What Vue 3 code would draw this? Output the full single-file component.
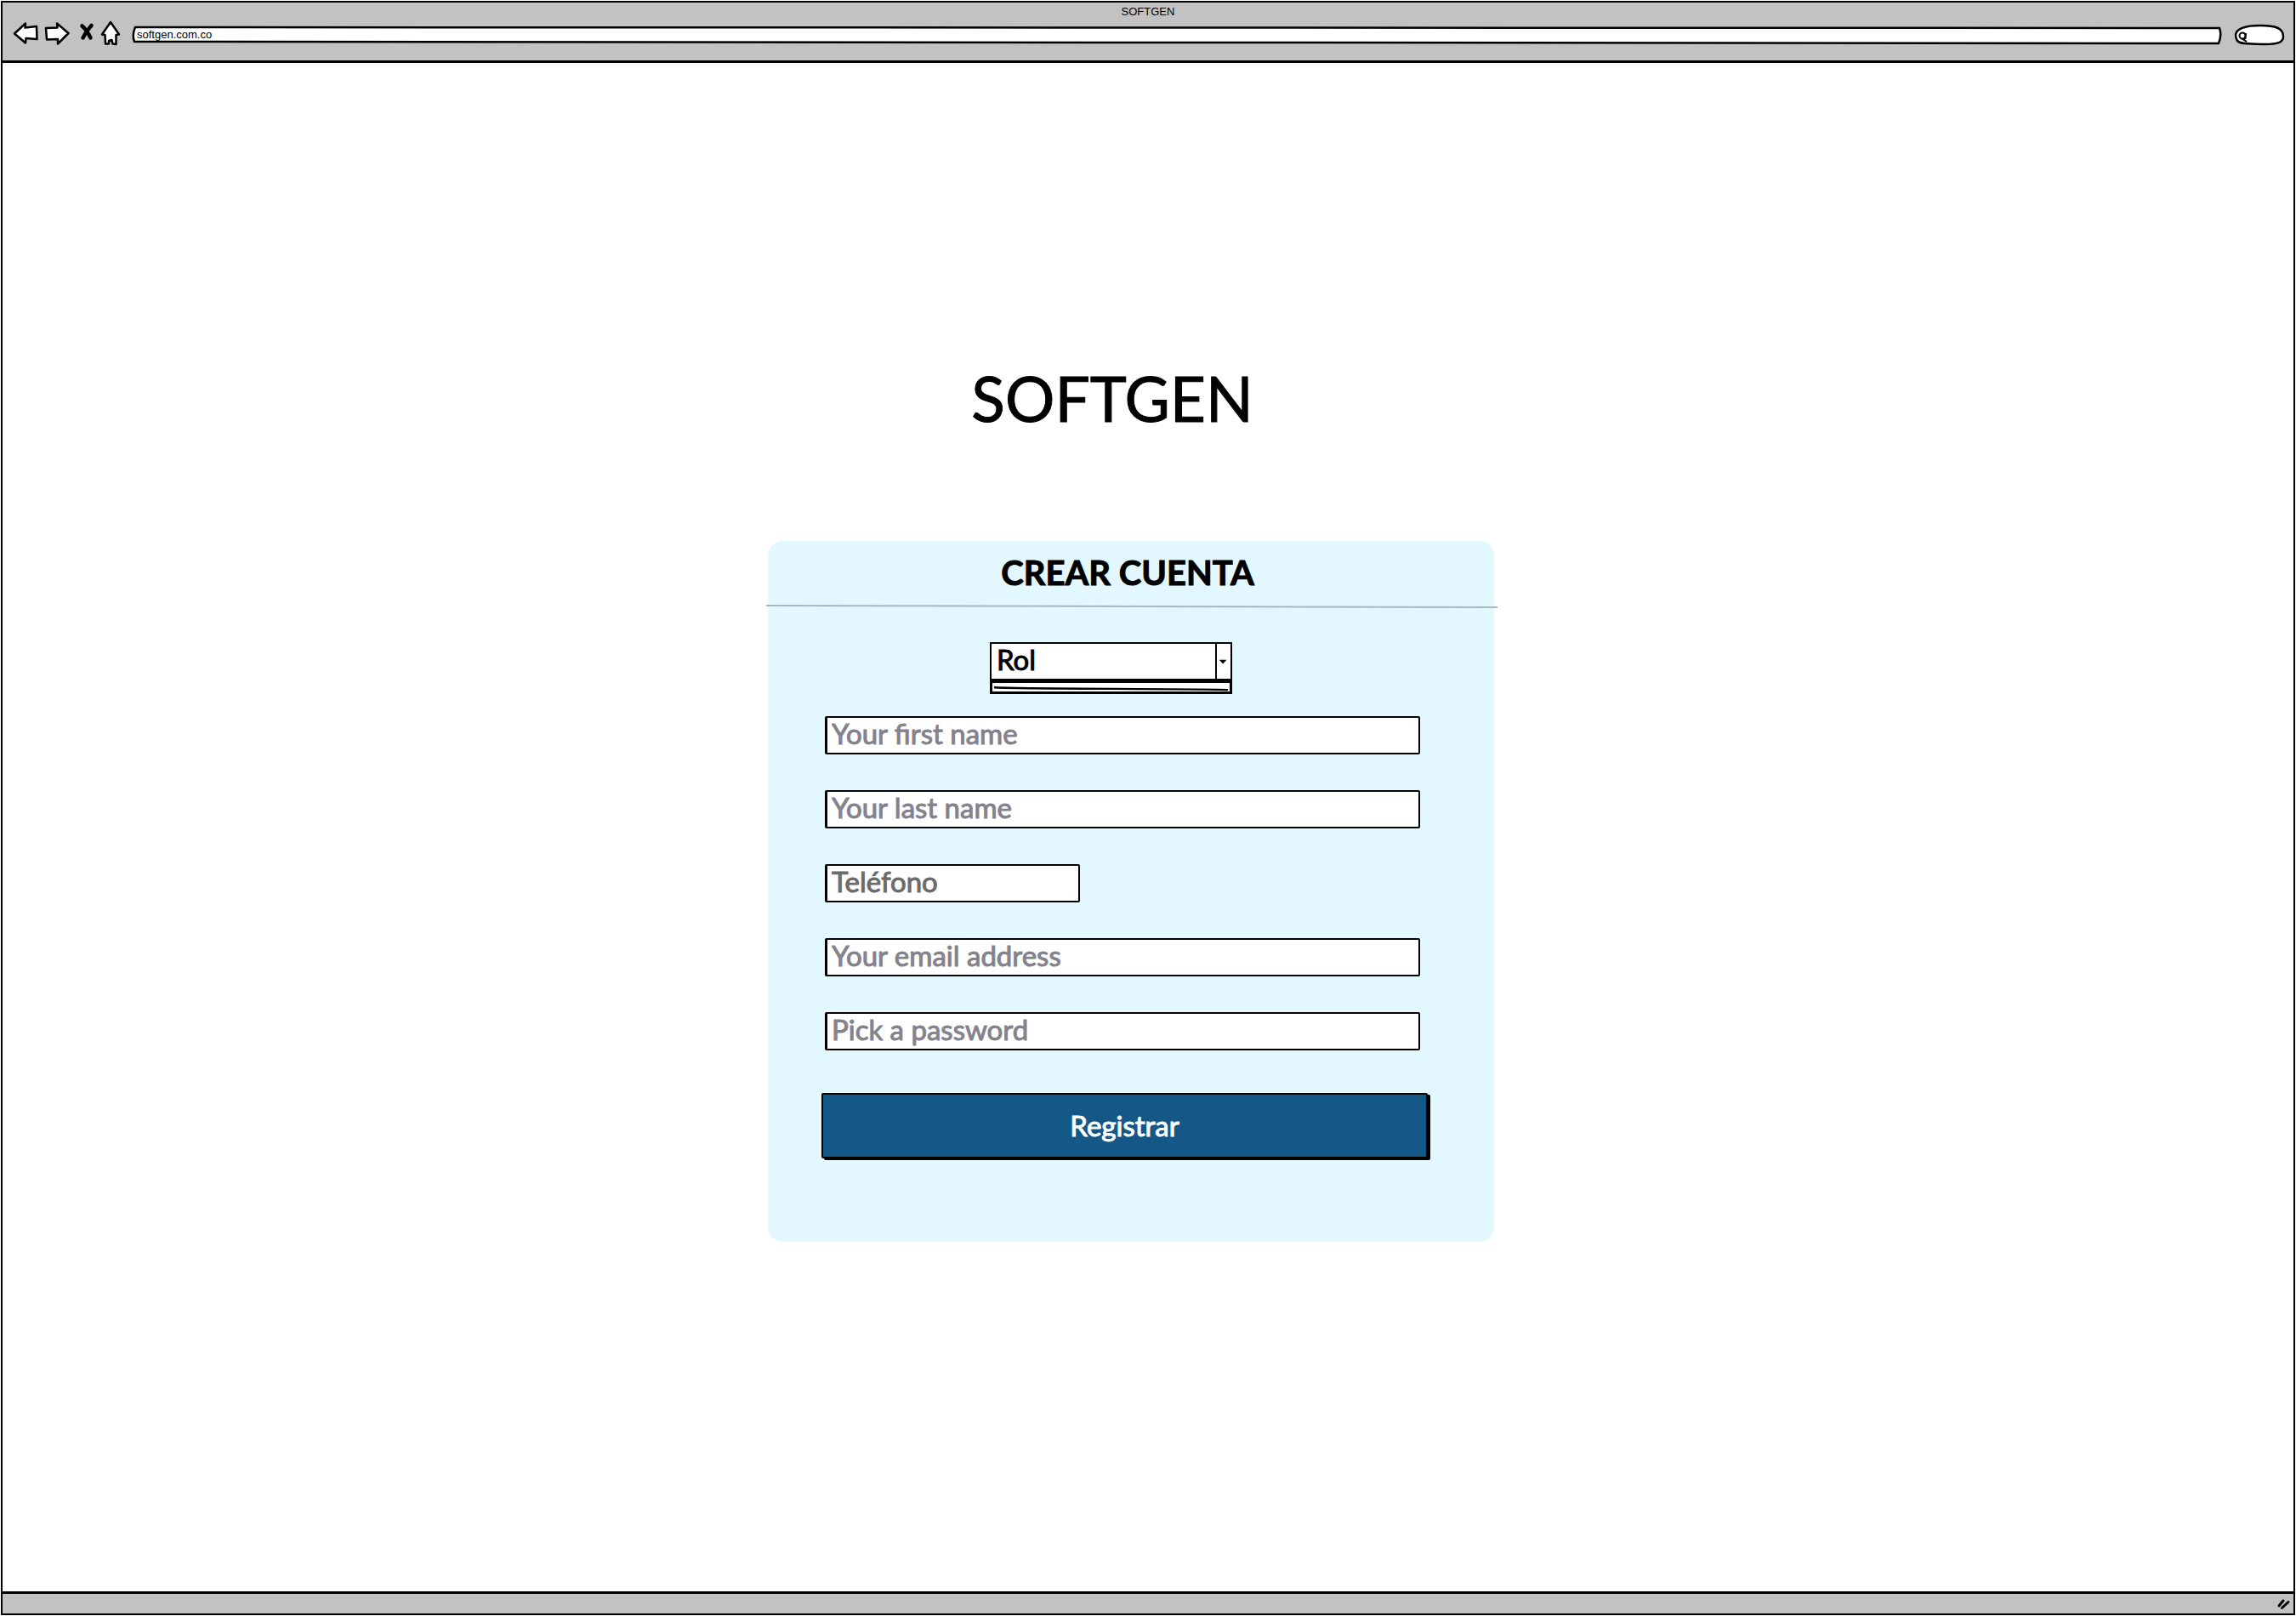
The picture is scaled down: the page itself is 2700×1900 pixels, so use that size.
<script setup>
import { ref } from 'vue'

const url = ref('softgen.com.co')
const search = ref('')
const role = ref('Rol')
const fields = [
  { id: 'first-name', label: 'Your first name', type: 'text' },
  { id: 'last-name', label: 'Your last name', type: 'text' },
  { id: 'phone', label: 'Teléfono', type: 'tel', short: true },
  { id: 'email', label: 'Your email address', type: 'email' },
  { id: 'password', label: 'Pick a password', type: 'password' },
]
</script>

<template>
  <div class="window">
    <header class="chrome">
      <div class="chrome-title">SOFTGEN</div>
      <div class="toolbar">
        <nav class="nav">
          <button type="button" aria-label="Back">
            <svg width="30" height="28" viewBox="0 0 30 28">
              <path d="M2 14.500 15 2.500 14.500 7.500 28 6 28.500 21 15.500 20 15 25.500Z" />
            </svg>
          </button>
          <button type="button" aria-label="Forward">
            <svg width="30" height="28" viewBox="0 0 30 28">
              <path d="M2 8 15.500 7.500 15 2.500 28.500 14 16 26.500 16 21 3 21.500Z" />
            </svg>
          </button>
          <button type="button" aria-label="Stop" class="stop">
            <svg width="18" height="28" viewBox="0 0 18 28">
              <path d="M3.500 5.500Q9 10 13.500 19.500M14.500 5Q8 12 4.500 19.500" />
            </svg>
          </button>
          <button type="button" aria-label="Home">
            <svg width="24" height="30" viewBox="0 0 24 30">
              <path d="M12 2 2 16.500 5.500 17 6 27.500 10 27.500 10 24 13.500 23 14.500 27.500 18.500 28 18.500 17 22 16.500Z" />
            </svg>
          </button>
        </nav>
        <div class="sketch address">
          <svg class="outline" viewBox="0 0 2458 20" preserveAspectRatio="none" aria-hidden="true">
            <path d="M3 1 2456 2Q2459 10 2455 20L2 18Q-1 10 3 1Z" />
          </svg>
          <input v-model="url" type="text" aria-label="Address">
        </div>
        <div class="sketch search">
          <svg class="outline" viewBox="0 0 58 24" preserveAspectRatio="none" aria-hidden="true">
            <path d="M1 12C2 5 10 1 30 1C48 1 57 4 57 14C57 21 50 23 36 23C22 22 8 24 3 19Q1 16 1 12Z" />
          </svg>
          <svg class="lens" width="14" height="14" viewBox="0 0 14 14" aria-hidden="true">
            <circle cx="7" cy="5" r="3.500" />
            <path d="M11 2 10.500 8 7.500 9 12 12" />
          </svg>
          <input v-model="search" type="search" aria-label="Search">
        </div>
      </div>
    </header>

    <main class="page">
      <h1>SOFTGEN</h1>
      <form class="card" @submit.prevent>
        <h2>CREAR CUENTA</h2>
        <svg class="rule" viewBox="0 0 860 6" preserveAspectRatio="none" aria-hidden="true">
          <path d="M0 1 860 3" />
        </svg>
        <div class="role">
          <div class="select-box">
            <select v-model="role" aria-label="Rol">
              <option>Rol</option>
            </select>
            <svg class="arrow" width="18" height="40" viewBox="0 0 18 40" aria-hidden="true">
              <path d="M3 18H13L8 23.500Z" />
            </svg>
          </div>
          <div class="tray">
            <svg viewBox="0 0 280 8" preserveAspectRatio="none" aria-hidden="true">
              <path d="M2 4Q8 5 140 5.500T278 6.500" />
            </svg>
          </div>
        </div>
        <div class="fields">
          <input
            v-for="field in fields"
            :key="field.id"
            :id="field.id"
            :type="field.type"
            :placeholder="field.label"
            :aria-label="field.label"
            :class="['field', { short: field.short }]"
          >
        </div>
        <button type="submit" class="submit">Registrar</button>
      </form>
    </main>

    <footer class="status">
      <svg width="18" height="16" viewBox="0 0 18 16" aria-hidden="true">
        <path d="M3 10 8 4M6.500 12.500 14 5.500" />
      </svg>
    </footer>
  </div>
</template>

<style>
body {
  display: flow-root;
  margin: 0;
  background: #fff;
}
</style>

<style scoped>
* {
  box-sizing: border-box;
}

.window {
  display: flex;
  flex-direction: column;
  min-height: calc(100vh - 2px);
  margin: 1px;
  border: 2px solid #000;
  font-family: Lato, "Open Sans", sans-serif;
  color: #000;
}

button,
input,
select {
  margin: 0;
  font-family: inherit;
  color: inherit;
}

.chrome {
  height: 71px;
  border-bottom: 3px solid #000;
  background: #c2c2c2;
  font-family: "Liberation Sans", Arial, sans-serif;
  font-size: 13px;
}

.chrome-title {
  height: 22px;
  line-height: 22px;
  text-align: center;
}

.toolbar {
  display: flex;
  align-items: center;
  height: 32px;
  padding: 0 11px 0 12px;
}

.nav {
  display: flex;
  align-items: center;
  gap: 7px;
  margin-right: 14px;
  padding-bottom: 4px;
}

.nav button {
  display: flex;
  padding: 0;
  border: 0;
  background: none;
}

.nav svg {
  fill: #fff;
  stroke: #000;
  stroke-width: 2.5;
  stroke-linejoin: round;
}

.nav .stop {
  margin-left: 4px;
}

.nav .stop svg {
  fill: none;
  stroke-width: 4.5;
  stroke-linecap: round;
}

.sketch {
  position: relative;
  display: flex;
}

.outline {
  position: absolute;
  inset: 0;
  width: 100%;
  height: 100%;
  overflow: visible;
  fill: #fff;
  stroke: #000;
  stroke-width: 2.5;
}

.outline path {
  vector-effect: non-scaling-stroke;
}

.sketch input {
  position: relative;
  width: 100%;
  padding: 0;
  border: 0;
  outline: 0;
  background: none;
  font-size: 13px;
}

.address {
  flex: 1;
  height: 20px;
  margin-right: 16px;
}

.address input {
  padding: 0 5px 2px;
}

.search {
  width: 58px;
  height: 24px;
}

.search input {
  appearance: none;
}

.lens {
  position: absolute;
  left: 2px;
  top: 8px;
  fill: none;
  stroke: #000;
  stroke-width: 2;
}

.page {
  display: flex;
  flex: 1;
  flex-direction: column;
  align-items: center;
  padding: 346px 40px 0 0;
}

h1 {
  margin: 0 44px 120px 0;
  font-size: 73px;
  font-weight: 400;
  line-height: 96px;
  -webkit-text-stroke: 1px;
}

.card {
  display: flex;
  flex-direction: column;
  width: 854px;
  max-width: 100%;
  padding-bottom: 98px;
  border-radius: 18px;
  background: #e3f7fe;
}

h2 {
  margin: 0;
  padding-right: 8px;
  font-size: 40px;
  font-weight: 700;
  line-height: 75px;
  text-align: center;
  -webkit-text-stroke: 1px;
}

.rule {
  width: calc(100% + 6px);
  height: 6px;
  margin: 0 -2px;
  fill: none;
  stroke: #a9b8c0;
  stroke-width: 2;
}

.role {
  width: 285px;
  margin: 38px 0 26px 261px;
}

.select-box {
  position: relative;
  display: flex;
  height: 45px;
  border: 2px solid #000;
  background: #fff;
}

.select-box select {
  flex: 1;
  padding: 0 24px 6px 6px;
  border: 0;
  appearance: none;
  background: none;
  font-size: 33px;
  line-height: 34px;
  -webkit-text-stroke: 1px;
}

.arrow {
  position: absolute;
  top: 0;
  right: 0;
  height: 100%;
  border-left: 2px solid #000;
  pointer-events: none;
}

.tray {
  display: flex;
  height: 16px;
  border: 3px solid #000;
  background: #fff;
}

.tray svg {
  width: 100%;
  height: 10px;
  fill: none;
  stroke: #000;
  stroke-width: 2;
}

.fields {
  display: flex;
  flex-direction: column;
  gap: 42px;
  padding: 0 87px 0 67px;
}

.field {
  width: 100%;
  height: 45px;
  padding: 0 5px 6px;
  border: 2px solid #000;
  border-left-width: 3px;
  border-radius: 2px;
  outline: 0;
  background: #fff;
  font-size: 33px;
  -webkit-text-stroke: 1px;
}

.field.short {
  width: 300px;
}

.field::placeholder {
  color: #83828d;
  opacity: 1;
}

.field.short::placeholder {
  color: #6b6b6b;
}

.submit {
  height: 77px;
  margin: 50px 78px 0 63px;
  padding: 0 0 2px;
  border: 2px solid #000;
  border-radius: 2px;
  background: #135886;
  box-shadow: 3px 2px 0 #000;
  color: #fff;
  font-size: 33px;
  -webkit-text-stroke: 1px;
}

.status {
  display: flex;
  align-items: center;
  justify-content: flex-end;
  height: 26px;
  padding-right: 2px;
  border-top: 3px solid #000;
  background: #c2c2c2;
}

.status svg {
  stroke: #000;
  stroke-width: 3;
  stroke-linecap: round;
}
</style>
